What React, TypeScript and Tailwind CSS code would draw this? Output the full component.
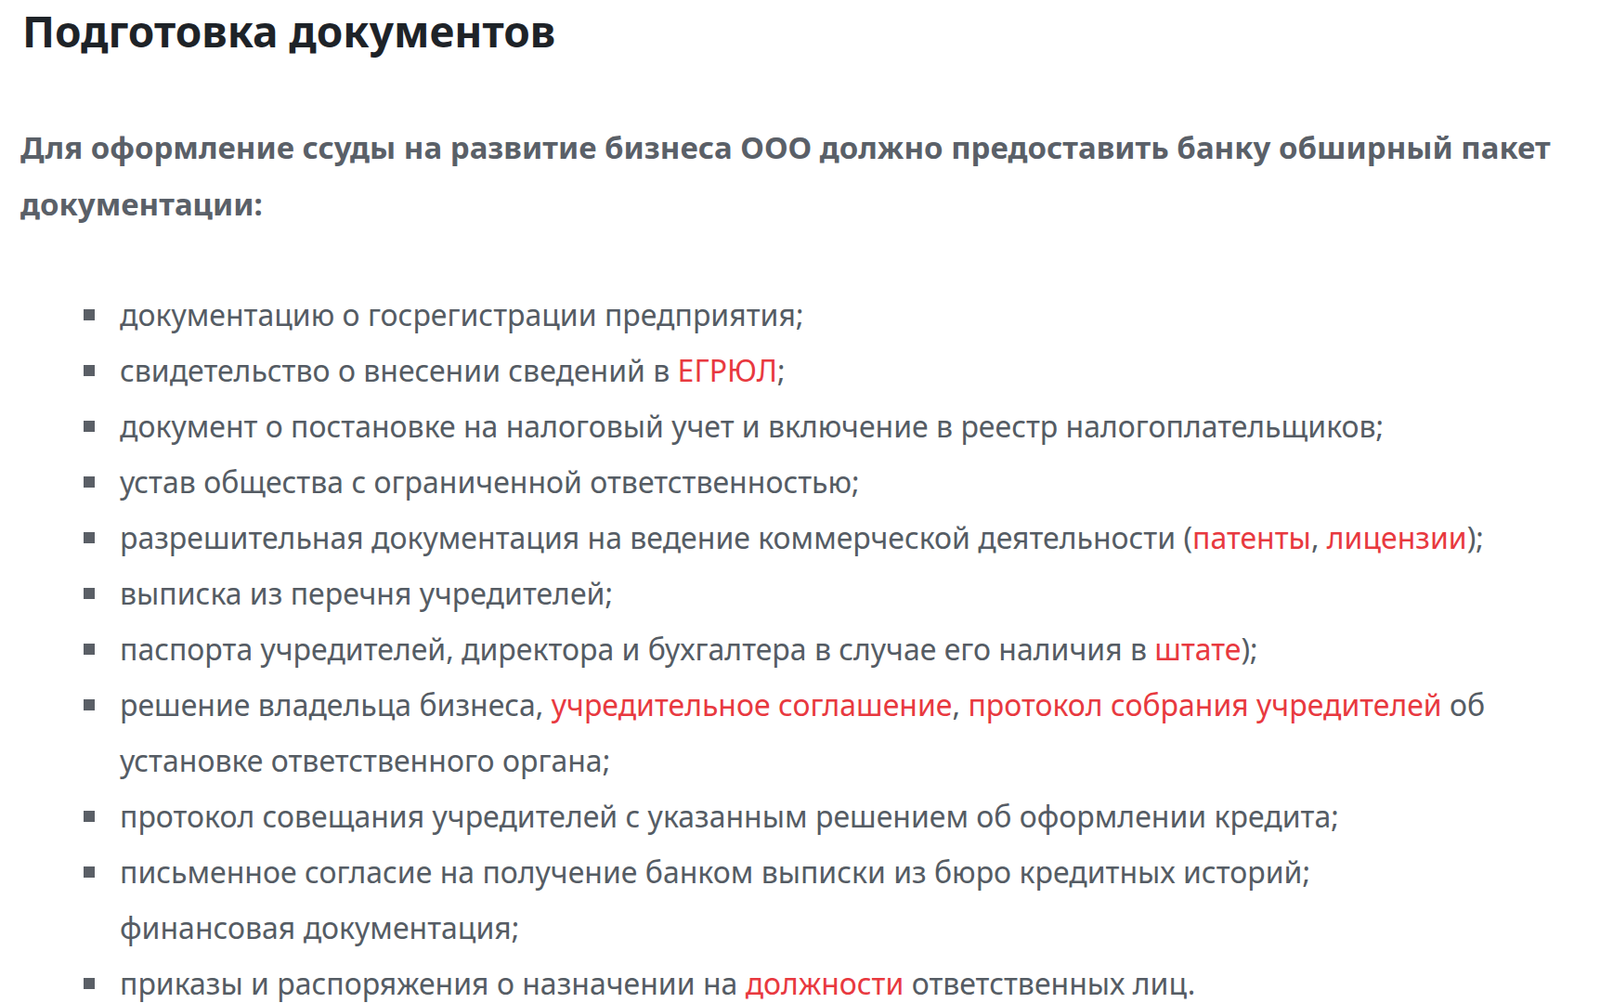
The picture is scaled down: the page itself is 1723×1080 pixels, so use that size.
const R = ({ children }: { children: React.ReactNode }) => (
  <span className="text-[#e8393f]">{children}</span>
);

const items: React.ReactNode[] = [
  <>документацию о госрегистрации предприятия;</>,
  <>свидетельство о внесении сведений в <R>ЕГРЮЛ</R>;</>,
  <>документ о постановке на налоговый учет и включение в реестр налогоплательщиков;</>,
  <>устав общества с ограниченной ответственностью;</>,
  <>разрешительная документация на ведение коммерческой деятельности (<R>патенты</R>, <R>лицензии</R>);</>,
  <>выписка из перечня учредителей;</>,
  <>паспорта учредителей, директора и бухгалтера в случае его наличия в <R>штате</R>);</>,
  <>решение владельца бизнеса, <R>учредительное соглашение</R>, <R>протокол собрания учредителей</R> об установке ответственного органа;</>,
  <>протокол совещания учредителей с указанным решением об оформлении кредита;</>,
  <>письменное согласие на получение банком выписки из бюро кредитных историй;<br />финансовая документация;</>,
  <>приказы и распоряжения о назначении на <R>должности</R> ответственных лиц.</>,
];

export default function App() {
  return (
    <div className="min-h-screen bg-white font-['Open_Sans',sans-serif]">
      <div className="w-[1700px] pl-[22px]">
        <h1 className="pl-[2px] text-[46px] font-bold leading-[66px] text-[#1e2328]">Подготовка документов</h1>
        <p className="mt-[62px] text-[33px] font-bold leading-[61px] text-[#5a6068]">
          Для оформление ссуды на развитие бизнеса ООО должно предоставить банку обширный пакет документации:
        </p>
        <ul className="mt-[59px] text-[32px] leading-[60px] text-[#555c64]">
          {items.map((it, i) => (
            <li key={i} className="flex">
              <span className="flex w-[107px] shrink-0 justify-end pr-[27px] pt-[24px]">
                <span className="h-[12px] w-[12px] bg-[#5a5f66]" />
              </span>
              <span>{it}</span>
            </li>
          ))}
        </ul>
      </div>
    </div>
  );
}
